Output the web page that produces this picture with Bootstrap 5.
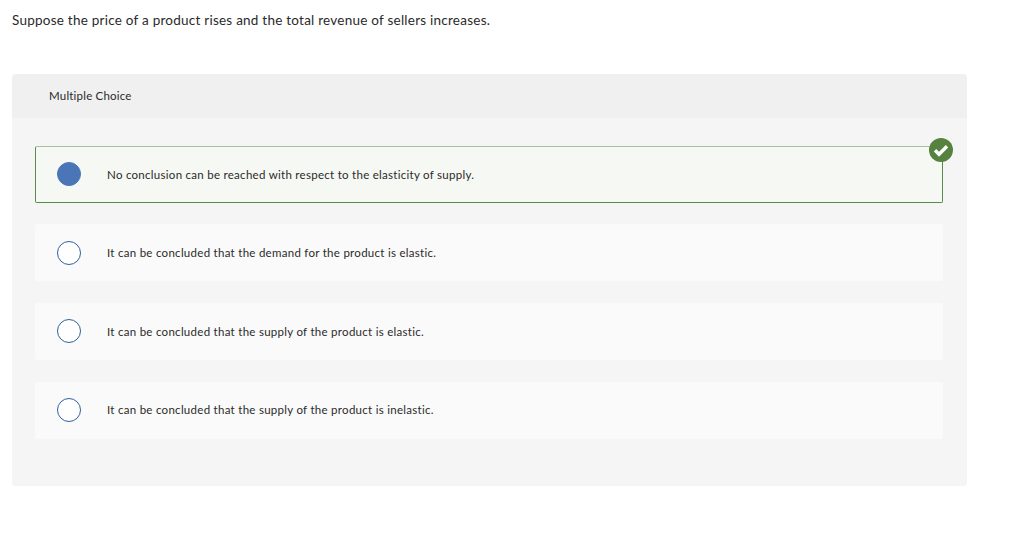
<!DOCTYPE html>
<html lang="en">
<head>
    <meta charset="UTF-8">
    <title>Multiple Choice</title>
    <link href="https://cdn.jsdelivr.net/npm/bootstrap@5.3.0/dist/css/bootstrap.min.css" rel="stylesheet">
    <style>
        body {
            background-color: #ffffff;
            font-family: Lato, "Liberation Sans", sans-serif;
            color: #2a2a2a;
        }

        .page-wrap {
            width: 967px;
            padding: 11px 0 0 12px;
        }

        .question-text {
            font-size: 13.5px;
            line-height: 18px;
            letter-spacing: 0.24px;
            margin-bottom: 45px;
        }

        .quiz-panel {
            background-color: #f5f5f5;
            border: 0;
            border-radius: 3px;
            height: 412px;
        }

        .quiz-head {
            background-color: #f0f0f0;
            border: 0;
            height: 44px;
            padding: 0 0 0 37px;
            font-size: 11.5px;
            letter-spacing: 0.2px;
        }

        .quiz-body {
            padding: 27.8px 24px 0 23px;
            gap: 21.6px;
        }

        .choice-row {
            position: relative;
            height: 57px;
            padding-left: 22px;
            column-gap: 26px;
            background-color: #fafafa;
            border-radius: 2px;
            font-size: 11.5px;
            letter-spacing: 0.28px;
        }

        .choice-picked {
            padding-left: 21px;
            background-color: #f6f8f4;
            border: 1px solid #5a8a4a;
            border-top-color: #a9c29c;
        }

        .choice-dot {
            width: 24px;
            height: 24px;
            flex: none;
            border-radius: 50%;
            background-color: #ffffff;
            border: 1px solid #2f5f9e;
        }

        .choice-picked .choice-dot {
            background-color: #4a76b8;
            border-color: #4a76b8;
        }

        .tick-mark {
            position: absolute;
            top: -9px;
            right: -11px;
            width: 24px;
            height: 24px;
        }
    </style>
</head>
<body>
    <div class="page-wrap">
        <p class="question-text">Suppose the price of a product rises and the total revenue of sellers increases.</p>
        <div class="card quiz-panel">
            <div class="card-header quiz-head d-flex align-items-center">Multiple Choice</div>
            <div class="quiz-body d-flex flex-column">
                <div class="choice-row choice-picked d-flex align-items-center">
                    <span class="choice-dot"></span>
                    <span>No conclusion can be reached with respect to the elasticity of supply.</span>
                    <svg class="tick-mark" viewBox="0 0 24 24">
                        <circle cx="12" cy="12" r="12" fill="#55833f"/>
                        <path d="M6 12.3l4 4 8-8" fill="none" stroke="#fff" stroke-width="3.4"/>
                    </svg>
                </div>
                <div class="choice-row d-flex align-items-center">
                    <span class="choice-dot"></span>
                    <span>It can be concluded that the demand for the product is elastic.</span>
                </div>
                <div class="choice-row d-flex align-items-center">
                    <span class="choice-dot"></span>
                    <span>It can be concluded that the supply of the product is elastic.</span>
                </div>
                <div class="choice-row d-flex align-items-center">
                    <span class="choice-dot"></span>
                    <span>It can be concluded that the supply of the product is inelastic.</span>
                </div>
            </div>
        </div>
    </div>
    <script src="https://cdn.jsdelivr.net/npm/bootstrap@5.3.0/dist/js/bootstrap.bundle.min.js"></script>
</body>
</html>
